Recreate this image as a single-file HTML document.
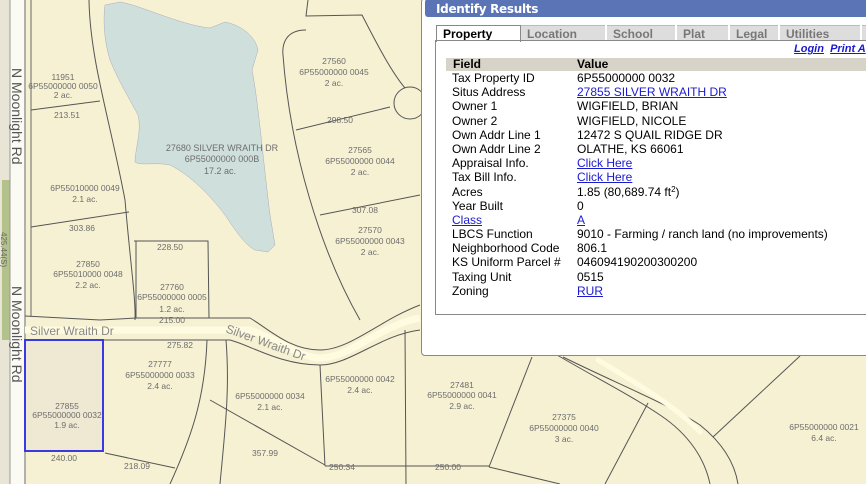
<!DOCTYPE html>
<html><head><meta charset="utf-8"><style>
*{margin:0;padding:0;box-sizing:border-box}
body{width:866px;height:484px;overflow:hidden;position:relative;background:#f6f1d3;font-family:"Liberation Sans",Arial,sans-serif}
svg{position:absolute;left:0;top:0}
.panel{position:absolute;left:421px;top:-2px;width:450px;height:358px;background:#fff;border:1px solid #888;border-radius:4px}
.hdr{position:absolute;left:3px;top:0;right:0;height:18px;background:#5b74b5;color:#fff;font-weight:bold;font-size:12px;padding:3px 0 0 11px;border-radius:3px;font-family:"DejaVu Sans",sans-serif;letter-spacing:-0.3px}
.tabs{position:absolute;left:14px;top:26px;height:16px;font-size:12px;font-weight:bold}
.tab{position:absolute;top:0;height:16px;background:#ddd;color:#777;border-top:1px solid #bbb;padding:1px 0 0 6px}
.tab.sel{background:#fff;color:#000;border:1px solid #888;border-bottom:none;height:17px}
.box{position:absolute;left:13px;top:41px;width:460px;height:275px;border:1px solid #888}
.links{position:absolute;left:372px;top:44px;font-size:11px;font-weight:bold;font-style:italic;white-space:nowrap}
a{color:#1a1ad0;text-decoration:underline}
.thead{position:absolute;left:24px;top:59px;width:430px;height:13px;background:#d8d3c9;font-size:12px;font-weight:bold;line-height:13px}
.rows{position:absolute;left:30px;top:72px;font-size:12px;line-height:14.2px;color:#000}
.r{white-space:nowrap;height:14.2px;position:relative}
.r span{position:absolute;left:125px}
sup{font-size:8px;line-height:0;vertical-align:4px}
</style></head><body>
<svg width="866" height="484" viewBox="0 0 866 484" font-family="Liberation Sans, sans-serif" fill="#6d6d6d">
<rect x="0" y="0" width="866" height="484" fill="#f6f1d3"/>
<rect x="0" y="0" width="12" height="484" fill="#e8e4d6"/>
<rect x="2" y="180" width="9" height="160" fill="#b3c28a"/>
<rect x="10" y="0" width="16" height="484" fill="#fbfaf3"/>
<line x1="10" y1="0" x2="10" y2="484" stroke="#999"/>
<line x1="25" y1="0" x2="25" y2="484" stroke="#666"/>
<line x1="31" y1="0" x2="31" y2="316" stroke="#666"/>
<text transform="translate(12,68) rotate(90)" font-size="14" fill="#555">N Moonlight Rd</text>
<text transform="translate(12,286) rotate(90)" font-size="14" fill="#555">N Moonlight Rd</text>
<text transform="translate(1,232) rotate(90)" font-size="8" fill="#666">425.44(S)</text>
<path d="M105 5 L120 2 C140 5 180 25 210 28 L225 22 C240 25 255 35 258 50 L252 70 C258 100 262 150 270 215 L275 245 L268 252 L255 250 C245 245 235 230 225 215 C210 195 190 175 170 165 C155 162 140 166 135 162 C135 150 142 130 138 115 C130 100 118 80 110 60 C104 40 103 20 105 5 Z" fill="#cfe0dc" stroke="#aab" stroke-width="0.5"/>
<g stroke="#555" stroke-width="1" fill="none">
<path d="M89 0 C90 60 110 120 125 200 C130 260 136 300 135 320"/>
<line x1="31" y1="110" x2="100" y2="101"/>
<line x1="31" y1="227" x2="129" y2="212"/>
<path d="M134 241 L208 241 L209 318"/>
<line x1="136" y1="318" x2="136" y2="241"/>
<path d="M308 0 L306 16 L362 15 C375 40 390 70 405 88"/>
<path d="M306 30 C285 30 282 45 283 55 C290 150 320 250 360 320"/>
<line x1="296" y1="130" x2="390" y2="107"/>
<line x1="320" y1="215" x2="420" y2="195"/>
<circle cx="410" cy="103" r="16"/>
<path d="M25 316 L100 320 L136 318 L209 318 L250 318 C270 330 290 350 320 350 C350 350 380 320 420 305"/>
<path d="M25 340 L205 340 L230 340 C250 345 280 365 320 365 C350 365 380 335 420 330"/>
<path d="M207 340 C205 400 190 440 170 484"/>
<path d="M226 340 C230 390 225 430 220 484"/>
<line x1="320" y1="365" x2="325" y2="466"/>
<line x1="405" y1="330" x2="406" y2="484"/>
<line x1="210" y1="400" x2="325" y2="465"/>
<line x1="325" y1="466" x2="489" y2="466"/>
<line x1="105" y1="453" x2="175" y2="468"/>
<path d="M563 357 C620 385 670 405 700 425 C725 445 735 465 738 484"/>
<path d="M557 355 C600 380 630 395 660 415 C690 435 705 460 710 484"/>
<line x1="532" y1="357" x2="489" y2="467"/>
<line x1="648" y1="403" x2="605" y2="484"/>
<line x1="489" y1="467" x2="560" y2="484"/>
<line x1="713" y1="437" x2="800" y2="356"/>
</g>
<path d="M25 330 L250 330 C280 340 300 358 320 358 C350 358 380 325 420 318" stroke="#fffbe0" stroke-width="7" fill="none"/>
<path d="M598 360 C640 385 680 410 700 432" stroke="#fffbe0" stroke-width="5" fill="none" stroke-linecap="round"/>
<rect x="25" y="340" width="78" height="111" fill="#efe9d3" stroke="#3a3ae0" stroke-width="2"/>
<text x="30" y="335" font-size="12" fill="#888">Silver Wraith Dr</text>
<text transform="translate(225,332) rotate(20)" font-size="12" fill="#888">Silver Wraith Dr</text>
<g font-size="8.5" text-anchor="middle">
<text x="222" y="151" font-size="9">27680 SILVER WRAITH DR</text><text x="222" y="162" font-size="9">6P55000000 000B</text><text x="220" y="174" font-size="9">17.2 ac.</text>
<text x="63" y="80">11951</text><text x="63" y="89">6P55000000 0050</text><text x="63" y="98">2 ac.</text>
<text x="85" y="191">6P55010000 0049</text><text x="85" y="202">2.1 ac.</text>
<text x="88" y="267">27850</text><text x="88" y="277">6P55010000 0048</text><text x="88" y="288">2.2 ac.</text>
<text x="172" y="290">27760</text><text x="172" y="300">6P55000000 0005</text><text x="172" y="312">1.2 ac.</text>
<text x="334" y="64">27560</text><text x="334" y="75">6P55000000 0045</text><text x="334" y="86">2 ac.</text>
<text x="360" y="153">27565</text><text x="360" y="164">6P55000000 0044</text><text x="360" y="175">2 ac.</text>
<text x="370" y="233">27570</text><text x="370" y="244">6P55000000 0043</text><text x="370" y="255">2 ac.</text>
<text x="160" y="367">27777</text><text x="160" y="378">6P55000000 0033</text><text x="160" y="389">2.4 ac.</text>
<text x="270" y="399">6P55000000 0034</text><text x="270" y="410">2.1 ac.</text>
<text x="360" y="382">6P55000000 0042</text><text x="360" y="393">2.4 ac.</text>
<text x="67" y="409">27855</text><text x="67" y="418">6P55000000 0032</text><text x="67" y="428">1.9 ac.</text>
<text x="462" y="388">27481</text><text x="462" y="398">6P55000000 0041</text><text x="462" y="409">2.9 ac.</text>
<text x="564" y="420">27375</text><text x="564" y="431">6P55000000 0040</text><text x="564" y="442">3 ac.</text>
<text x="824" y="430">6P55000000 0021</text><text x="824" y="441">6.4 ac.</text>
<text x="67" y="118">213.51</text><text x="82" y="231">303.86</text><text x="170" y="250">228.50</text><text x="172" y="323">215.00</text><text x="180" y="348">275.82</text><text x="64" y="461">240.00</text><text x="137" y="469">218.09</text><text x="265" y="456">357.99</text><text x="342" y="470">250.34</text><text x="448" y="470">250.00</text><text x="365" y="213">307.08</text><text x="340" y="123">298.50</text>
</g>
</svg>
<div class="panel">
<div class="hdr">Identify Results</div>
<div class="tabs">
<div class="tab" style="left:85px;width:84px">Location</div>
<div class="tab" style="left:171px;width:68px">School</div>
<div class="tab" style="left:241px;width:51px">Plat</div>
<div class="tab" style="left:294px;width:48px">Legal</div>
<div class="tab" style="left:344px;width:80px">Utilities</div>
<div class="tab" style="left:426px;width:30px"></div>
<div class="tab sel" style="left:0;width:85px">Property</div>
</div>
<div class="box"></div>
<div class="links"><a>Login</a>&nbsp; <a>Print A</a></div>
<div class="thead"><span style="position:absolute;left:7px">Field</span><span style="position:absolute;left:131px">Value</span></div>
<div class="rows">
<div class="r">Tax Property ID<span>6P55000000 0032</span></div>
<div class="r">Situs Address<span><a>27855 SILVER WRAITH DR</a></span></div>
<div class="r">Owner 1<span>WIGFIELD, BRIAN</span></div>
<div class="r">Owner 2<span>WIGFIELD, NICOLE</span></div>
<div class="r">Own Addr Line 1<span>12472 S QUAIL RIDGE DR</span></div>
<div class="r">Own Addr Line 2<span>OLATHE, KS 66061</span></div>
<div class="r">Appraisal Info.<span><a>Click Here</a></span></div>
<div class="r">Tax Bill Info.<span><a>Click Here</a></span></div>
<div class="r">Acres<span>1.85 (80,689.74 ft<sup>2</sup>)</span></div>
<div class="r">Year Built<span>0</span></div>
<div class="r"><a>Class</a><span><a>A</a></span></div>
<div class="r">LBCS Function<span>9010 - Farming / ranch land (no improvements)</span></div>
<div class="r">Neighborhood Code<span>806.1</span></div>
<div class="r">KS Uniform Parcel #<span>046094190200300200</span></div>
<div class="r">Taxing Unit<span>0515</span></div>
<div class="r">Zoning<span><a>RUR</a></span></div>
</div>
</div>
</body></html>
